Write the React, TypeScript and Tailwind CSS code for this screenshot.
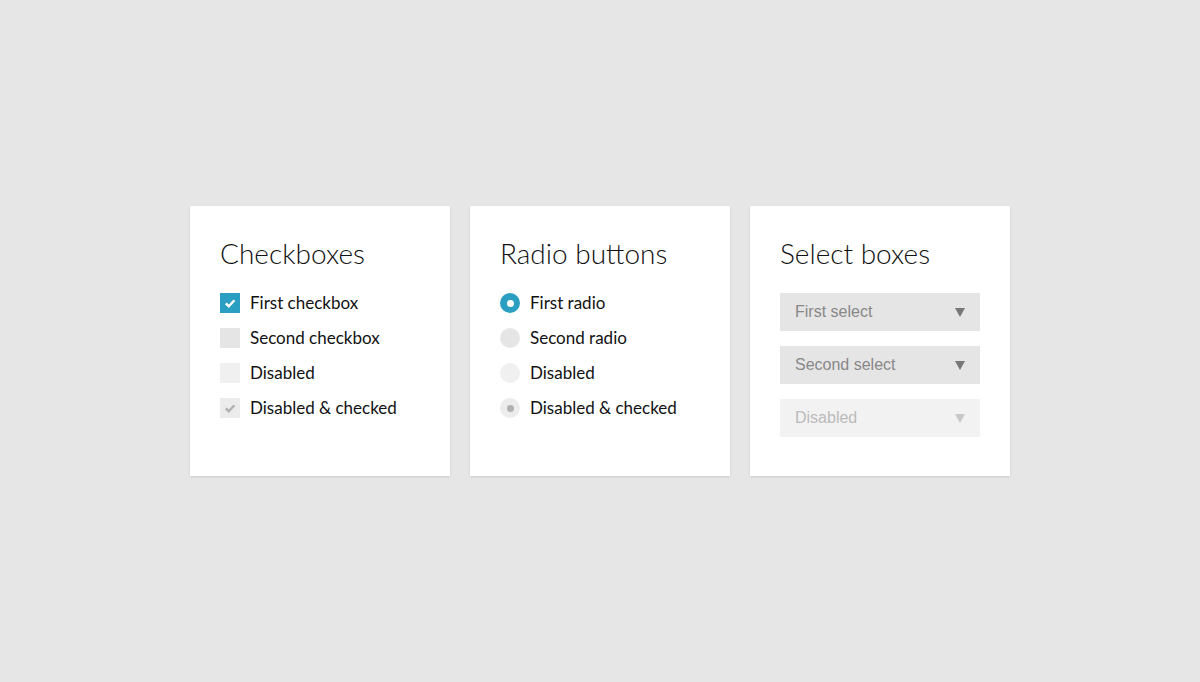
import { ReactNode } from "react"

const blue = "#2a9fc2"

function Card({ title, children }: { title: string; children: ReactNode }) {
  return (
    <div className="w-[260px] h-[270px] bg-white shadow-[0_1px_2px_rgba(0,0,0,0.12)] px-[30px] pt-[30px]">
      <h2 className="text-[28px] leading-[34px] font-light text-[#111] mb-[23px]">{title}</h2>
      {children}
    </div>
  )
}

function Check({ color = "#fff" }: { color?: string }) {
  return (
    <svg width="12" height="12" viewBox="0 0 12 12">
      <path d="M1.8 6.3 L4.8 9.2 L10.4 3.2" fill="none" stroke={color} strokeWidth="2.4" />
    </svg>
  )
}

function CheckRow({ label, box }: { label: string; box: ReactNode }) {
  return (
    <div className="flex items-center h-[20px] mb-[15px]">
      {box}
      <span className="ml-[10px] text-[17px] text-[#111]">{label}</span>
    </div>
  )
}

function Select({ label, disabled }: { label: string; disabled?: boolean }) {
  return (
    <div
      className={
        disabled
          ? "flex items-center justify-between w-[200px] h-[38px] mb-[15px] pl-[15px] pr-[15px] bg-[#f2f2f2] text-[#bbb]"
          : "flex items-center justify-between w-[200px] h-[38px] mb-[15px] pl-[15px] pr-[15px] bg-[#e5e5e5] text-[#888]"
      }
      style={{ fontFamily: '"Liberation Sans", Arial, sans-serif' }}
    >
      <span className="text-[16px]">{label}</span>
      <svg width="10" height="9" viewBox="0 0 10 9">
        <path d="M0 0 H10 L5 9 Z" fill={disabled ? "#c8c8c8" : "#777"} />
      </svg>
    </div>
  )
}

export default function App() {
  return (
    <div
      className="min-h-screen w-full bg-[#e6e6e6] flex items-center justify-center gap-[20px]"
      style={{ fontFamily: 'Lato, "Noto Sans", sans-serif' }}
    >
      <Card title="Checkboxes">
        <CheckRow
          label="First checkbox"
          box={
            <span className="w-[20px] h-[20px] flex items-center justify-center" style={{ background: blue }}>
              <Check />
            </span>
          }
        />
        <CheckRow label="Second checkbox" box={<span className="w-[20px] h-[20px] bg-[#e5e5e5]" />} />
        <CheckRow label="Disabled" box={<span className="w-[20px] h-[20px] bg-[#f0f0f0]" />} />
        <CheckRow
          label="Disabled & checked"
          box={
            <span className="w-[20px] h-[20px] bg-[#ececec] flex items-center justify-center">
              <Check color="#b0b0b0" />
            </span>
          }
        />
      </Card>
      <Card title="Radio buttons">
        <CheckRow
          label="First radio"
          box={
            <span className="w-[20px] h-[20px] rounded-full flex items-center justify-center" style={{ background: blue }}>
              <span className="w-[7px] h-[7px] rounded-full bg-white" />
            </span>
          }
        />
        <CheckRow label="Second radio" box={<span className="w-[20px] h-[20px] rounded-full bg-[#e5e5e5]" />} />
        <CheckRow label="Disabled" box={<span className="w-[20px] h-[20px] rounded-full bg-[#f0f0f0]" />} />
        <CheckRow
          label="Disabled & checked"
          box={
            <span className="w-[20px] h-[20px] rounded-full bg-[#ececec] flex items-center justify-center">
              <span className="w-[7px] h-[7px] rounded-full bg-[#b0b0b0]" />
            </span>
          }
        />
      </Card>
      <Card title="Select boxes">
        <Select label="First select" />
        <Select label="Second select" />
        <Select label="Disabled" disabled />
      </Card>
    </div>
  )
}
